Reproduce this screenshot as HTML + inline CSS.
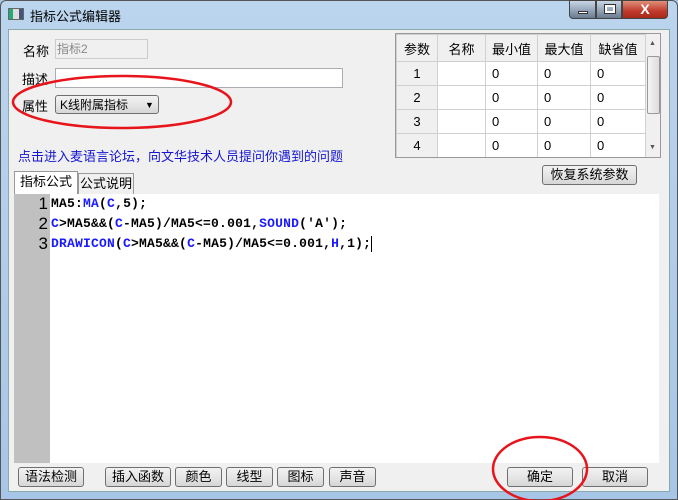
<!DOCTYPE html>
<html><head><meta charset="utf-8"><style>
*{margin:0;padding:0;box-sizing:border-box}
body{width:678px;height:500px;overflow:hidden;background:#a9c8e8;font-family:"Liberation Sans","Noto Sans CJK SC",sans-serif;font-size:12px;position:relative}
.frame{position:absolute;left:0;top:0;width:678px;height:500px;background:linear-gradient(#bcd5ee,#a7c5e6);border:1px solid #555;border-radius:6px 6px 0 0}
.title{position:absolute;left:30px;top:6px;font-size:13px;color:#000}
.ticon{position:absolute;left:8px;top:8px;width:16px;height:12px;background:linear-gradient(90deg,#2a7 0 30%,#ddd 30% 70%,#457 70%);border:1px solid #666}
.client{position:absolute;left:8px;top:29px;width:662px;height:463px;background:#f0f0f0;border:1px solid #8aa}
.a{position:absolute}
.lbl{font-size:13px;color:#000}
.btn{position:absolute;height:20px;border:1px solid #707070;border-radius:3px;background:linear-gradient(#f2f2f2,#e6e6e6 50%,#d6d6d6);font-size:13px;text-align:center;line-height:18px}
table{border-collapse:collapse;font-size:13px}
td{border:1px solid #d0d0d0;height:24px;background:#fff;padding-left:6px}
td.h{background:#f0f0f0;text-align:center;padding:0}
.code{font-family:"Liberation Mono","DejaVu Sans Mono",monospace;font-weight:bold;font-size:13px;line-height:20px;white-space:pre;letter-spacing:0.2px}
.b{color:#1a1aff}
</style></head><body>
<div class="frame"></div>
<div class="ticon"></div>
<div class="title">指标公式编辑器</div>
<div class="a" style="left:569px;top:0;width:27px;height:19px;background:linear-gradient(#c8d6e6,#6b7c90);border:1px solid #444;border-radius:0 0 0 4px"><div class="a" style="left:8px;top:10px;width:10px;height:3px;background:#fff;border:1px solid #333"></div></div>
<div class="a" style="left:596px;top:0;width:26px;height:19px;background:linear-gradient(#c8d6e6,#6b7c90);border:1px solid #444"><div class="a" style="left:8px;top:4px;width:10px;height:8px;border:2px solid #fff;outline:1px solid #333"></div></div>
<div class="a" style="left:622px;top:0;width:46px;height:19px;background:linear-gradient(#e0907a,#c0392b 60%,#a52a1a);border:1px solid #444;border-radius:0 0 4px 0;color:#fff;font-weight:bold;text-align:center;font-size:14px;line-height:17px">X</div>
<div class="client"></div>
<div class="a lbl" style="left:23px;top:41px">名称</div>
<div class="a" style="left:55px;top:39px;width:93px;height:20px;border:1px solid #ccc;background:#f0f0f0;color:#888;font-size:12px;padding-left:1px">指标2</div>
<div class="a lbl" style="left:22px;top:69px">描述</div>
<div class="a" style="left:55px;top:68px;width:288px;height:20px;border:1px solid #abadb3;background:#fff"></div>
<div class="a lbl" style="left:22px;top:96px">属性</div>
<div class="btn" style="left:55px;top:95px;width:104px;height:19px;text-align:left;padding-left:4px;font-size:12px">K线附属指标<span style="position:absolute;left:89px;top:0;font-size:9px">▼</span></div>
<div class="a" style="left:18px;top:146px;color:#1515d0;font-size:13px">点击进入麦语言论坛，向文华技术人员提问你遇到的问题</div>
<div class="a" style="left:395px;top:33px;width:266px;height:125px;border:1px solid #999;background:#f0f0f0;overflow:hidden">
<table style="position:absolute;left:0;top:0">
<tr><td class="h" style="width:41px;height:27px">参数</td><td class="h" style="width:48px">名称</td><td class="h" style="width:52px">最小值</td><td class="h" style="width:53px">最大值</td><td class="h" style="width:55px">缺省值</td></tr>
<tr><td class="h">1</td><td></td><td>0</td><td>0</td><td>0</td></tr>
<tr><td class="h">2</td><td></td><td>0</td><td>0</td><td>0</td></tr>
<tr><td class="h">3</td><td></td><td>0</td><td>0</td><td>0</td></tr>
<tr><td class="h">4</td><td></td><td>0</td><td>0</td><td>0</td></tr>
</table>
<div class="a" style="left:250px;top:0;width:15px;height:124px;background:#f0f0f0"><div class="a" style="left:3px;top:6px;font-size:7px;color:#555">▲</div><div class="a" style="left:1px;top:22px;width:13px;height:58px;border:1px solid #999;border-radius:2px;background:linear-gradient(90deg,#f4f4f4,#ddd)"></div><div class="a" style="left:3px;top:110px;font-size:7px;color:#555">▼</div></div>
</div>
<div class="btn" style="left:542px;top:165px;width:95px">恢复系统参数</div>
<div class="a" style="left:14px;top:171px;width:64px;height:23px;background:#fff;border:1px solid #999;border-bottom:none;font-size:13px;text-align:center;line-height:20px">指标公式</div>
<div class="a" style="left:78px;top:173px;width:56px;height:21px;background:#f0f0f0;border:1px solid #999;border-bottom:none;font-size:13px;text-align:center;line-height:19px">公式说明</div>
<div class="a" style="left:14px;top:194px;width:645px;height:269px;background:#fff"></div>
<div class="a" style="left:14px;top:194px;width:36px;height:269px;background:#c0c0c0"></div>
<div class="a" style="left:14px;top:194px;width:34px;text-align:right;font-size:17px;line-height:20px;font-family:'Liberation Sans',sans-serif">1<br>2<br>3</div>
<div class="a code" style="left:51px;top:194px">MA5:<span class="b">MA</span>(<span class="b">C</span>,5);
<span class="b">C</span>&gt;MA5&amp;&amp;(<span class="b">C</span>-MA5)/MA5&lt;=0.001,<span class="b">SOUND</span>('A');
<span class="b">DRAWICON</span>(<span class="b">C</span>&gt;MA5&amp;&amp;(<span class="b">C</span>-MA5)/MA5&lt;=0.001,<span class="b">H</span>,1);<span style="display:inline-block;width:1px;height:16px;background:#000;vertical-align:middle;font-weight:normal"></span></div>
<div class="btn" style="left:18px;top:467px;width:66px">语法检测</div>
<div class="btn" style="left:105px;top:467px;width:66px">插入函数</div>
<div class="btn" style="left:175px;top:467px;width:47px">颜色</div>
<div class="btn" style="left:226px;top:467px;width:47px">线型</div>
<div class="btn" style="left:277px;top:467px;width:47px">图标</div>
<div class="btn" style="left:329px;top:467px;width:47px">声音</div>
<div class="btn" style="left:507px;top:467px;width:66px">确定</div>
<div class="btn" style="left:582px;top:467px;width:66px">取消</div>
<svg class="a" style="left:0;top:0" width="678" height="500"><ellipse cx="122" cy="102" rx="109" ry="26" fill="none" stroke="#e8141b" stroke-width="2.5"/><ellipse cx="540" cy="469" rx="47" ry="32" fill="none" stroke="#e8141b" stroke-width="2.5"/></svg>
</body></html>
